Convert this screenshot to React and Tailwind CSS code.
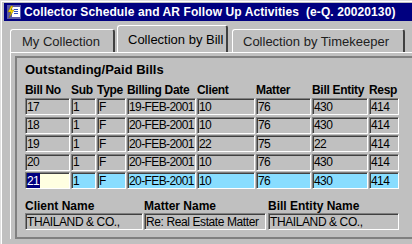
import React from 'react'

const cols = [
  { label: 'Bill No', w: 'w-[45px]' },
  { label: 'Sub', w: 'w-[25px]' },
  { label: 'Type', w: 'w-[29px]' },
  { label: 'Billing Date', w: 'w-[69px]' },
  { label: 'Client', w: 'w-[58px]' },
  { label: 'Matter', w: 'w-[55px]' },
  { label: 'Bill Entity', w: 'w-[56px]' },
  { label: 'Resp', w: 'w-[30px]' },
]

const rows = [
  ['17', '1', 'F', '19-FEB-2001', '10', '76', '430', '414'],
  ['18', '1', 'F', '20-FEB-2001', '10', '76', '430', '414'],
  ['19', '1', 'F', '20-FEB-2001', '22', '75', '22', '414'],
  ['20', '1', 'F', '20-FEB-2001', '10', '76', '430', '414'],
  ['21', '1', 'F', '20-FEB-2001', '10', '76', '430', '414'],
]

const sunken = 'border border-t-[#808080] border-l-[#808080] border-b-white border-r-white shadow-[inset_1px_1px_0_#404040]'

function AppIcon(){
  return (
    <svg width="14" height="14" viewBox="0 0 14 14">
      <rect x="0" y="0" width="14" height="14" fill="#5a5aa8" />
      <rect x="5" y="2" width="8" height="10" fill="#ffffff" />
      <rect x="7" y="4" width="4" height="1" fill="#3050c0" />
      <rect x="7" y="6" width="4" height="1" fill="#3050c0" />
      <rect x="7" y="8" width="4" height="1" fill="#3050c0" />
      <path d="M4 1 L1 7 L4 7 L2 13 L7 5 L4 5 L6 1 Z" fill="#ffe000" stroke="#806000" strokeWidth="0.5" />
    </svg>
  )
}

function Cell({ w, children, bg = 'bg-[#c0c0c0]' }){
  return (
    <div className={`${w} h-[17px] ${bg} ${sunken} flex items-center pl-[1px] text-[12px] tracking-[-0.6px] text-black overflow-hidden whitespace-nowrap`}>
      {children}
    </div>
  )
}

export default function App(){
  return (
    <div className="w-[412px] h-[244px] overflow-hidden bg-[#c0c0c0] font-['Liberation_Sans',Arial,sans-serif] border-t border-l border-[#dfdfdf]">
      <div className="h-full border-t border-l border-white pt-[1px] pl-[2px]">
        {/* title bar */}
        <div className="h-[18px] bg-[#000080] flex items-center pl-[3px]">
          <AppIcon />
          <span className="ml-[3px] text-white font-bold text-[12px] tracking-[0.1px] whitespace-pre">Collector Schedule and AR Follow Up Activities  (e-Q. 20020130)</span>
        </div>

        <div className="pl-[6px]">
          {/* tabs */}
          <div className="flex items-end h-[31px] text-[13px] text-[#202020]">
            <div className="w-[105px] h-[23px] border-t border-l border-white border-r-2 border-r-[#404040] rounded-t-[3px] pl-[11px] pt-[2px]">My Collection</div>
            <div className="ml-[2px] w-[111px] h-[27px] border-t border-l border-white border-r-2 border-r-[#404040] rounded-t-[3px] pl-[10px] pt-[4px] text-black">Collection by Bill</div>
            <div className="ml-[4px] w-[173px] h-[23px] border-t border-l border-white border-r-2 border-r-[#404040] rounded-t-[3px] pl-[10px] pt-[2px]">Collection by Timekeeper</div>
          </div>

          {/* tab panel */}
          <div className="border-t border-l border-white pl-[4px] pt-[3px]">
            <div className="border-t-2 border-l-2 border-b-2 border-[#808080] pl-[8px] h-[183px]">
              <div className="text-[13px] font-bold leading-[16px] pt-[4px] text-black">Outstanding/Paid Bills</div>

              <div className="flex gap-[1px] mt-[6px] leading-[13px] text-[12px] font-bold tracking-[-0.3px] text-black">
                {cols.map(c => (
                  <div key={c.label} className={`${c.w} whitespace-nowrap`}>{c.label}</div>
                ))}
              </div>

              <div className="flex flex-col gap-[1.5px] mt-[1px]">
                {rows.map((r, ri) => {
                  const current = ri === rows.length - 1
                  return (
                    <div key={ri} className="flex gap-[1px]">
                      {r.map((v, ci) => {
                        if(current && ci === 0){
                          return (
                            <Cell key={ci} w={cols[ci].w} bg="bg-[#ffffe1]">
                              <span className="bg-[#000080] text-white pr-[1px]">{v}</span>
                            </Cell>
                          )
                        }
                        return <Cell key={ci} w={cols[ci].w} bg={current ? 'bg-[#88ddff]' : 'bg-[#c0c0c0]'}>{v}</Cell>
                      })}
                    </div>
                  )
                })}
              </div>

              <div className="flex mt-[10px]">
                <div className="w-[118px]">
                  <div className="text-[12px] font-bold leading-[14px]">Client Name</div>
                  <div className={`h-[17px] ${sunken} flex items-center pl-[1px] text-[12px] tracking-[-0.4px]`}>THAILAND &amp; CO.,</div>
                </div>
                <div className="w-[122px] ml-[1px]">
                  <div className="text-[12px] font-bold leading-[14px]">Matter Name</div>
                  <div className={`h-[17px] ${sunken} flex items-center pl-[1px] text-[12px] tracking-[-0.4px]`}>Re: Real Estate Matter</div>
                </div>
                <div className="w-[131px] ml-[2px]">
                  <div className="text-[12px] font-bold leading-[14px]">Bill Entity Name</div>
                  <div className={`h-[17px] ${sunken} flex items-center pl-[1px] text-[12px] tracking-[-0.4px]`}>THAILAND &amp; CO.,</div>
                </div>
              </div>
            </div>
          </div>
        </div>
      </div>
    </div>
  )
}
